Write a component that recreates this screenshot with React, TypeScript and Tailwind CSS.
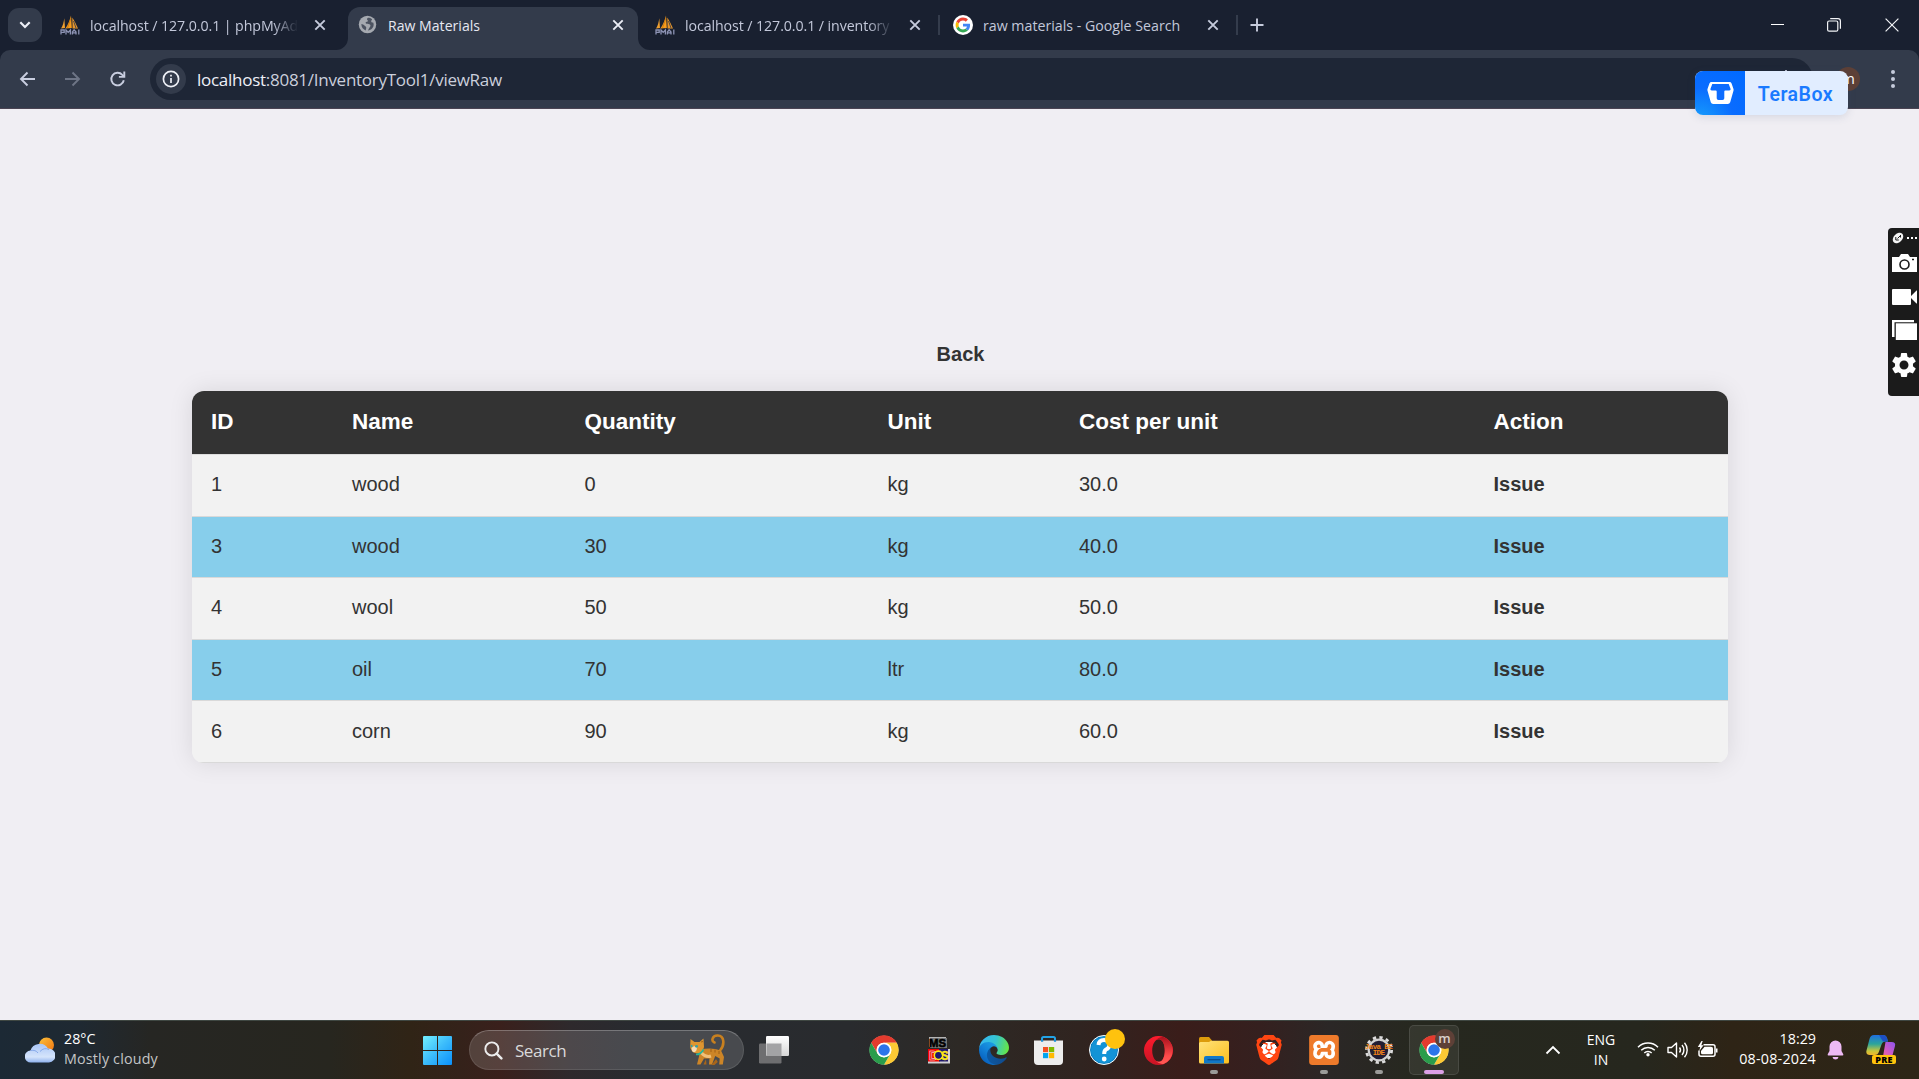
import React, { ReactNode } from "react";
import { SiBrave, SiXampp } from "react-icons/si";

const ui = "font-['Open_Sans','Noto_Sans',sans-serif]";

/* ---------- browser icons ---------- */

function Sails() {
  return (
    <svg width="20" height="20" viewBox="0 0 20 20">
      <path d="M1 13.5C3 10.500 3.700 7 4.300 3.200L5 13z" fill="#f0a030" />
      <path d="M5.500 13.500C8 9.500 10 5 11 0.500L11.800 13z" fill="#f89c1c" />
      <path d="M12.300 2.500C14.500 6 16.500 10 18 13.500H12.600z" fill="#e8962a" />
      <path d="M7.500 13 11 3" stroke="#b86f10" strokeWidth="0.700" />
      <path d="M13.500 6 16 13" stroke="#26324c" strokeWidth="0.800" />
      <path
        d="M1 19.500v-4.500h3.200v2.400H1M6 19.500V15l2.200 2.400L10.400 15v4.500M12.400 19.500V17l1.700-2.200L16 17v2.500M12.400 17.800H16M18.800 14.500v5"
        stroke="#8d93b4"
        strokeWidth="1.300"
        fill="none"
      />
    </svg>
  );
}

function Globe() {
  return (
    <svg width="19" height="19" viewBox="0 0 20 20">
      <circle cx="10" cy="10" r="9.200" fill="#a5a9b0" />
      <path
        d="M10.500 3c-1.400.8-1.200 2-.4 2.500.7.500.4 1.500-.7 1.700-1.600.3-1.700 1-1 1.700.8.700 2.500.4 3.600.8 1.500.5 1.400 2 .5 2.900-.9 1-1.300 2.400-2 3.600 3.600-.300 6-3 6-6.200 0-.8-.2-1.500-.5-2.200-1.200.3-2.100-.2-2.100-1.200 0-1 .9-1.200.9-2C13.500 3.500 12 3 10.500 3zM3.500 9.500c1.400.2 2.600.700 3.300 1.600.8 1 1.900 1 1.900 2.200 0 1-.6 1.400-.4 2.900-2.700-.7-4.700-3-4.800-6.700z"
        fill="#4c5361"
      />
    </svg>
  );
}

function GoogleMark() {
  return (
    <svg width="20" height="20" viewBox="0 0 20 20">
      <circle cx="10" cy="10" r="10" fill="#fff" />
      <g transform="translate(2.600 2.600) scale(0.308)">
        <path fill="#EA4335" d="M24 9.500c3.540 0 6.710 1.220 9.210 3.600l6.850-6.850C35.900 2.380 30.470 0 24 0 14.620 0 6.510 5.380 2.560 13.220l7.980 6.190C12.430 13.720 17.740 9.500 24 9.500z" />
        <path fill="#4285F4" d="M46.980 24.550c0-1.570-.15-3.090-.38-4.550H24v9.020h12.940c-.58 2.960-2.260 5.480-4.780 7.180l7.730 6c4.510-4.180 7.090-10.360 7.090-17.650z" />
        <path fill="#FBBC05" d="M10.530 28.590c-.48-1.450-.76-2.990-.76-4.590s.27-3.140.76-4.590l-7.980-6.190C.92 16.460 0 20.120 0 24c0 3.880.92 7.540 2.560 10.780l7.970-6.190z" />
        <path fill="#34A853" d="M24 48c6.480 0 11.930-2.130 15.890-5.810l-7.730-6c-2.150 1.450-4.920 2.300-8.160 2.300-6.260 0-11.570-4.220-13.470-9.910l-7.980 6.190C6.510 42.620 14.620 48 24 48z" />
      </g>
    </svg>
  );
}

function Cross({ color = "#c6cbdc" }: { color?: string }) {
  return (
    <svg width="12" height="12" viewBox="0 0 12 12" className="shrink-0">
      <path d="M1.300 1.300l9.400 9.400M10.700 1.300l-9.400 9.400" stroke={color} strokeWidth="1.900" />
    </svg>
  );
}

function Tab({ icon, title, width, fade = true }: { icon: ReactNode; title: string; width: string; fade?: boolean }) {
  return (
    <div className={`flex h-[34px] items-center ${width}`}>
      <span className="shrink-0">{icon}</span>
      <span
        className={`mt-px ml-[10px] w-[208px] overflow-hidden whitespace-nowrap text-[14.200px] leading-5 text-[#c3c8da] ${
          fade ? "tracking-[-0.080px] [mask-image:linear-gradient(to_right,black_88%,transparent)]" : ""
        }`}
      >
        {title}
      </span>
      <span className="ml-[16px]">
        <Cross />
      </span>
    </div>
  );
}

function TabStrip() {
  return (
    <div className="flex h-[50px] items-start bg-[#192030]">
      <div className="ml-[8px] mt-[8px] flex h-[34px] w-[34px] items-center justify-center rounded-[11px] bg-[#333b4b]">
        <svg width="12" height="8" viewBox="0 0 12 8">
          <path d="M1.300 1.300 6 6l4.700-4.700" stroke="#eceef6" strokeWidth="2.200" fill="none" />
        </svg>
      </div>
      <div className="mt-[8px] pl-[18px]">
        <Tab icon={<Sails />} title="localhost / 127.0.0.1 | phpMyAd" width="w-[288px]" />
      </div>
      <div className="relative mt-[7px] flex h-[43px] w-[290px] items-center rounded-t-[12px] bg-[#333b4b] pb-[8px] pl-[10px]">
        <svg className="absolute -left-[12px] bottom-0" width="12" height="12">
          <path d="M12 0v12H0A12 12 0 0 0 12 0z" fill="#333b4b" />
        </svg>
        <svg className="absolute -right-[12px] bottom-0" width="12" height="12">
          <path d="M0 0v12h12A12 12 0 0 1 0 0z" fill="#333b4b" />
        </svg>
        <Globe />
        <span className="ml-[11px] mt-[2px] w-[208px] whitespace-nowrap text-[14.100px] leading-5 text-[#e6e8f2]">Raw Materials</span>
        <span className="ml-[16px] mt-px">
          <Cross color="#eceef6" />
        </span>
      </div>
      <div className="mt-[8px] pl-[17px]">
        <Tab icon={<Sails />} title="localhost / 127.0.0.1 / inventory" width="w-[283px]" />
      </div>
      <div className="mt-[15px] h-[20px] w-[2px] bg-[#343c4c]" />
      <div className="mt-[8px] pl-[13px]">
        <Tab icon={<GoogleMark />} title="raw materials - Google Search" width="w-[283px]" fade={false} />
      </div>
      <div className="mt-[15px] h-[20px] w-[2px] bg-[#343c4c]" />
      <svg className="ml-[12px] mt-[18px]" width="14" height="14" viewBox="0 0 14 14">
        <path d="M7 0.500v13M0.500 7h13" stroke="#c6cbdc" strokeWidth="1.900" />
      </svg>
      <div className="ml-auto mr-[20px] mt-[17px] flex h-[15px] items-center">
        <div className="h-px w-[13px] bg-white" />
        <svg className="ml-[43px]" width="14" height="14" viewBox="0 0 14 14" fill="none" stroke="#f2f3f6">
          <rect x="0.600" y="3" width="10.200" height="10.200" rx="1.500" strokeWidth="1.200" />
          <path d="M3.200 0.600H11a2.400 2.400 0 0 1 2.400 2.400v7.800" strokeWidth="1.200" />
        </svg>
        <svg className="ml-[44px]" width="14" height="14" viewBox="0 0 14 14">
          <path d="M0.600 0.600l12.800 12.800M13.400 0.600 0.600 13.400" stroke="#f2f3f6" strokeWidth="1.200" />
        </svg>
      </div>
    </div>
  );
}

function Toolbar() {
  return (
    <div className="h-[59px] bg-[#192030]">
      <div className="flex h-[59px] items-center rounded-t-[10px] border-b border-[#4b4453] bg-[#333b4b]">
        <svg className="ml-[19px]" width="17" height="16" viewBox="0 0 17 16" fill="none" stroke="#c9cee0" strokeWidth="1.900">
          <path d="M16 8H2.500M8.500 1.500 2 8l6.500 6.500" />
        </svg>
        <svg className="ml-[28px]" width="17" height="16" viewBox="0 0 17 16" fill="none" stroke="#6e7586" strokeWidth="1.900">
          <path d="M1 8h13.500M8.500 1.500 15 8l-6.500 6.500" />
        </svg>
        <svg className="ml-[28px]" width="18" height="18" viewBox="0 0 18 18" fill="none" stroke="#c9cee0" strokeWidth="1.900">
          <path d="M14.800 10.200A6.300 6.300 0 1 1 13.300 4.800L15 6.500" />
          <path d="M15.300 1.500v5.400h-5.400" />
        </svg>
        <div className="ml-[23px] flex h-[42px] w-[1663px] items-center rounded-full bg-[#1e2636] pl-[6px]">
          <div className="flex size-[30px] items-center justify-center rounded-full bg-[#333b4b]">
            <svg width="18" height="18" viewBox="0 0 18 18" fill="none" stroke="#eef0f6">
              <circle cx="9" cy="9" r="7.600" strokeWidth="1.700" />
              <path d="M9 8v5M9 4.700v1.900" strokeWidth="1.700" />
            </svg>
          </div>
          <span className="mt-px ml-[11px] text-[17px] leading-6 tracking-[-0.270px] text-[#cbcfdc]">
            <span className="text-[#eef0f8]">localhost</span>:8081/InventoryTool1/viewRaw
          </span>
        </div>
        <div className="ml-[23px] flex size-[24px] items-center justify-center rounded-full bg-[#5d4037] pb-[2px] text-[15px] leading-none text-white">
          m
        </div>
        <div className="ml-[31px] flex w-[4px] flex-col gap-[3px]">
          <i className="size-[4px] rounded-full bg-[#c6cbdc]" />
          <i className="size-[4px] rounded-full bg-[#c6cbdc]" />
          <i className="size-[4px] rounded-full bg-[#c6cbdc]" />
        </div>
      </div>
    </div>
  );
}

/* ---------- overlays ---------- */

function TeraBox() {
  return (
    <div className="absolute left-[1695px] top-[71px]">
      <i className="absolute -top-px left-[90px] h-px w-[2px] bg-[#aeb3c4]" />
      <div className="flex h-[44px] w-[153px] overflow-hidden rounded-[8px] bg-[#e1edff] shadow-[0_2px_8px_rgba(60,80,120,0.150)]">
        <div className="flex w-[50px] items-center justify-center bg-[radial-gradient(circle_at_10%_115%,#18a0fb_0%,#0a6cff_50%,#006aff_100%)]">
          <svg width="27" height="24" viewBox="0 0 27 24">
            <path
              d="M4.500 1h18q1.500 0 2.100 1.400L26.500 8q.3 1-.1 2l-3.200 11.200Q22.600 23 20.800 23H6.200q-1.800 0-2.400-1.800L.6 10q-.4-1-.1-2l1.900-5.600Q3 1 4.500 1z"
              fill="#fff"
            />
            <path d="M5.300 3h16.400l2 5.200q-.4 1.300-1.700 1.300h-3.800q-.9 0-.9 1v6.700q0 1.800-1.800 1.800h-4q-1.800 0-1.800-1.800v-6.700q0-1-.9-1H5q-1.300 0-1.700-1.300z" fill="#0d6cff" />
          </svg>
        </div>
        <div className="flex flex-1 items-center justify-center pt-[3px] pr-[2px] font-[Roboto,sans-serif] text-[19.500px] font-semibold tracking-[0.500px] text-[#1a7aff]">
          TeraBox
        </div>
      </div>
    </div>
  );
}

function CapturePanel() {
  return (
    <div className="absolute left-[1888px] top-[228px] flex h-[168px] w-[31px] flex-col items-start rounded-l-[4px] bg-[#1b1b1b] pl-[4px] text-white">
      <div className="flex h-[26px] items-center pb-[6px]">
        <svg width="12" height="12" viewBox="0 0 12 12">
          <ellipse cx="6" cy="6" rx="6" ry="4.300" transform="rotate(-45 6 6)" fill="#f4f4f4" />
          <path d="M3.800 5v3h3M5.500 6.500 8.500 3.500M8.500 3v2.500" stroke="#1b1b1b" strokeWidth="1" fill="none" />
        </svg>
        <div className="ml-[3px] flex gap-[2px]">
          <i className="size-[2px] bg-white" />
          <i className="size-[2px] bg-white" />
          <i className="size-[2px] bg-white" />
        </div>
      </div>
      <svg width="25" height="18" viewBox="0 0 25 18">
        <path d="M0 3h7l2-3h7l2 3h7v15H0z" fill="#fff" />
        <circle cx="12.500" cy="10.500" r="4.500" fill="none" stroke="#1b1b1b" strokeWidth="1.600" />
        <path d="M20 5.500h2" stroke="#1b1b1b" strokeWidth="1.400" />
      </svg>
      <svg className="mt-[17px]" width="25" height="16" viewBox="0 0 25 16">
        <path d="M1 0h17q1 0 1 1v14q0 1-1 1H1q-1 0-1-1V1q0-1 1-1zM18 8l6.500-6.500H25v13h-.5z" fill="#fff" />
      </svg>
      <svg className="mt-[15px]" width="25" height="20" viewBox="0 0 25 20">
        <path d="M0 0h22v2.200H2.500V17H0z" fill="#fff" />
        <path d="M3.800 3.300H25V20H3.800z" fill="#fff" />
      </svg>
      <svg className="-ml-[3px] mt-[10px]" width="30" height="30" viewBox="0 0 24 24">
        <path
          fill="#fff"
          d="M19.140 12.940c.04-.3.06-.61.06-.94 0-.32-.02-.64-.07-.94l2.030-1.580a.49.49 0 0 0 .12-.61l-1.920-3.320a.488.488 0 0 0-.59-.22l-2.390.96c-.5-.38-1.030-.7-1.620-.94l-.36-2.540a.484.484 0 0 0-.48-.41h-3.840c-.24 0-.43.17-.47.41l-.36 2.540c-.59.24-1.130.57-1.620.94l-2.390-.96c-.22-.08-.47 0-.59.22L2.740 8.870c-.12.21-.08.47.12.61l2.030 1.580c-.05.3-.09.63-.09.94s.02.64.07.94l-2.030 1.580a.49.49 0 0 0-.12.61l1.920 3.320c.12.22.37.29.59.22l2.390-.96c.5.38 1.030.7 1.620.94l.36 2.540c.05.24.24.41.48.41h3.840c.24 0 .44-.17.47-.41l.36-2.540c.59-.24 1.130-.56 1.620-.94l2.390.96c.22.08.47 0 .59-.22l1.920-3.320c.12-.22.07-.47-.12-.61l-2.010-1.580zM12 15.600c-1.980 0-3.600-1.620-3.600-3.600s1.620-3.600 3.600-3.600 3.600 1.620 3.600 3.600-1.620 3.600-3.600 3.600z"
        />
      </svg>
    </div>
  );
}

/* ---------- page ---------- */

const rows = [
  { id: 1, name: "wood", quantity: 0, unit: "kg", cost: "30.0" },
  { id: 3, name: "wood", quantity: 30, unit: "kg", cost: "40.0" },
  { id: 4, name: "wool", quantity: 50, unit: "kg", cost: "50.0" },
  { id: 5, name: "oil", quantity: 70, unit: "ltr", cost: "80.0" },
  { id: 6, name: "corn", quantity: 90, unit: "kg", cost: "60.0" },
];

const columns = "grid grid-cols-[141px_232.500px_303px_191.500px_414.500px_1fr]";

function RawMaterials() {
  return (
    <main className="flex h-[911px] flex-col items-center bg-[#f0eef3] pt-[234px] font-['Liberation_Sans',Arial,sans-serif] text-[20px] text-[#333]">
      <a className="mb-[25px] ml-[2px] leading-[23px] font-bold">Back</a>
      <div className="w-[1536px] overflow-hidden rounded-[12px] bg-[#f2f2f2] shadow-[0_0_25px_rgba(0,0,0,0.100)]">
        <div className={`${columns} h-[64px] items-center border-b border-[#ddd] bg-[#333] pb-[2px] text-[22.500px] leading-[26px] font-bold text-white *:pl-[19.500px]`}>
          <span>ID</span>
          <span>Name</span>
          <span>Quantity</span>
          <span>Unit</span>
          <span>Cost per unit</span>
          <span>Action</span>
        </div>
        {rows.map((r) => (
          <div key={r.id} className={`${columns} h-[61.600px] items-center border-b border-[#d9d9d9] pb-px leading-[23px] *:pl-[19.500px] even:bg-[#f2f2f2] odd:bg-[#87ceeb]`}>
            <span>{r.id}</span>
            <span>{r.name}</span>
            <span>{r.quantity}</span>
            <span>{r.unit}</span>
            <span>{r.cost}</span>
            <a className="font-bold">Issue</a>
          </div>
        ))}
      </div>
    </main>
  );
}

/* ---------- taskbar icons ---------- */

function Weather() {
  return (
    <svg width="30" height="26" viewBox="0 0 30 26">
      <defs>
        <linearGradient id="sun" x1="0" y1="0" x2="1" y2="1">
          <stop offset="0" stopColor="#fcc13a" />
          <stop offset="1" stopColor="#f07310" />
        </linearGradient>
        <linearGradient id="cloud" x1="0" y1="0" x2="0" y2="1">
          <stop offset="0" stopColor="#a9c6f7" />
          <stop offset="0.700" stopColor="#d5e4fb" />
          <stop offset="1" stopColor="#8fb2ee" />
        </linearGradient>
      </defs>
      <circle cx="21.500" cy="8" r="7.500" fill="url(#sun)" />
      <path d="M6 25.500a6 6 0 0 1-.5-12A9.500 9 0 0 1 23 11.500a7 7 0 0 1 1 14z" fill="url(#cloud)" />
      <path d="M5.500 13.500q5-1 7.500 2.500M15 14.500q4-4.500 9-2" stroke="#86a9ea" strokeWidth="1" fill="none" />
    </svg>
  );
}

function Windows() {
  return (
    <svg width="29" height="29" viewBox="0 0 29 29">
      <defs>
        <linearGradient id="win" x1="0" y1="0" x2="29" y2="29" gradientUnits="userSpaceOnUse">
          <stop offset="0" stopColor="#73f0ff" />
          <stop offset="0.500" stopColor="#3cbcfb" />
          <stop offset="1" stopColor="#0a90fb" />
        </linearGradient>
      </defs>
      <path d="M0 1q0-1 1-1h13v14H0zM15 0h13q1 0 1 1v13H15zM0 15h14v14H1q-1 0-1-1zM15 15h14v13q0 1-1 1H15z" fill="url(#win)" />
    </svg>
  );
}

function Cat() {
  return (
    <svg width="36" height="32" viewBox="0 0 36 32" fill="none">
      <path d="M31 16.500C36 11 35.500 1.300 28.500 1.500 23 1.800 22 7 25.500 8.500" stroke="#c8801f" strokeWidth="2.600" strokeLinecap="round" />
      <path d="M11 16q10-3 21 .5l3 6.500-1.200 7.500h-3.600l.5-6-4.500-2.500L23 30.500h-3l.5-6H15l-3.500 6H8l2-8z" fill="#cd8527" />
      <path d="M27 25l1.800 3-3.300 3h-3zM17 25l.5 5.500h-3z" fill="#a8651a" />
      <path d="M12 18.500q5 5.500 10 3.500" stroke="#f0c079" strokeWidth="3" />
      <path d="M1.500 5l4 3h5l4-3.500.5 8.500q-1 6-7 6.500Q2 18.500 1.200 13z" fill="#df9630" />
      <path d="M2.500 14q2.500-3 5.500-.5-.5 5-3.500 4.800Q2.500 17 2.500 14z" fill="#f6dcb8" />
      <ellipse cx="2.600" cy="12" rx="1" ry="1.300" fill="#3a9fa5" />
      <ellipse cx="7.500" cy="12.300" rx="1.500" ry="1.400" fill="#3a9fa5" />
      <path d="M7 20.500q5 0 7.500-5" stroke="#24b59c" strokeWidth="1.700" />
      <path d="M22 15v3M26 15.500v3M30 17v3M12 8l2-.5" stroke="#9c5c14" strokeWidth="0.900" />
    </svg>
  );
}

function TaskView() {
  return (
    <svg width="30" height="28" viewBox="0 0 30 28">
      <defs>
        <linearGradient id="tv" x1="0" y1="0" x2="0" y2="1">
          <stop offset="0" stopColor="#fff" />
          <stop offset="1" stopColor="#d6d6d6" />
        </linearGradient>
      </defs>
      <rect x="0" y="7.500" width="22.500" height="20" rx="1.200" fill="#6e6e70" />
      <rect x="7" y="0" width="23" height="20" rx="1.200" fill="url(#tv)" />
      <rect x="7.500" y="7.500" width="15" height="12.500" fill="#a3a3a5" />
    </svg>
  );
}

function Chrome() {
  return (
    <svg width="30" height="30" viewBox="0 0 48 48">
      <circle cx="24" cy="24" r="23" fill="#fff" />
      <path d="M24 12.300h20.500A23.700 23.700 0 0 0 3.500 12.200l10.200 17.700A11.800 11.800 0 0 1 24 12.300z" fill="#e33b2e" />
      <path d="M34.200 29.900 24 47.600a23.700 23.700 0 0 0 20.500-35.300H24a11.800 11.800 0 0 1 10.200 17.600z" fill="#fcc934" />
      <path d="M13.800 29.900 3.500 12.200A23.700 23.700 0 0 0 24 47.600l10.200-17.700a11.800 11.800 0 0 1-20.400 0z" fill="#2a9d4b" />
      <circle cx="24" cy="24" r="11.800" fill="#fff" />
      <circle cx="24" cy="24" r="9.300" fill="#2b74ea" />
    </svg>
  );
}

function MsDos() {
  return (
    <svg width="22" height="28" viewBox="0 0 22 28" className="font-['Liberation_Sans',sans-serif] font-bold">
      <path d="M1 1h17v10H1z" fill="#b5b5b5" />
      <path d="M2 2h17v10H2z" fill="#777" />
      <text x="1" y="10.500" fontSize="11.500" textLength="17" lengthAdjust="spacingAndGlyphs" fill="#000" stroke="#000" strokeWidth="0.600">
        MS
      </text>
      <path d="M0 13h22v14.500H0z" fill="#d0d0d0" />
      <path d="M0 13h12v12.500H0z" fill="#f40000" />
      <path d="M11 13h9v12.500h-9z" fill="#20186e" />
      <text x="1" y="24" fontSize="13" fill="#e00000" stroke="#fff" strokeWidth="0.500">
        D
      </text>
      <circle cx="10.500" cy="19.300" r="4.200" fill="#20186e" stroke="#ffe818" strokeWidth="1.600" />
      <text x="13" y="24" fontSize="13" textLength="7.500" lengthAdjust="spacingAndGlyphs" fill="#ffe818" stroke="#ffe818" strokeWidth="0.500">
        S
      </text>
    </svg>
  );
}

function Edge() {
  return (
    <svg width="30" height="30" viewBox="0 0 256 256">
      <defs>
        <linearGradient id="e1" x1="63" y1="150" x2="241" y2="150" gradientUnits="userSpaceOnUse">
          <stop offset="0" stopColor="#0c59a4" />
          <stop offset="1" stopColor="#114a8b" />
        </linearGradient>
        <linearGradient id="e2" x1="150" y1="90" x2="46" y2="215" gradientUnits="userSpaceOnUse">
          <stop offset="0" stopColor="#1b9de2" />
          <stop offset="0.500" stopColor="#1383d9" />
          <stop offset="1" stopColor="#0a66c2" />
        </linearGradient>
        <linearGradient id="e3" x1="20" y1="50" x2="250" y2="110" gradientUnits="userSpaceOnUse">
          <stop offset="0" stopColor="#35b8f1" />
          <stop offset="0.500" stopColor="#35c4d0" />
          <stop offset="1" stopColor="#66e646" />
        </linearGradient>
      </defs>
      <path fill="url(#e1)" d="M231 190.500c-3.400 1.800-6.900 3.400-10.500 4.700a101.900 101.900 0 0 1-35.900 6.400c-47.300 0-88.500-32.500-88.500-74.300 0-11.500 6.400-21.900 16.400-27.600-42.800 1.800-53.800 46.400-53.800 72.500 0 74 68.100 81.400 82.800 81.400 7.900 0 19.800-2.300 27-4.600l1.300-.4a128.300 128.300 0 0 0 66.600-52.800 4 4 0 0 0-5.400-5.300z" />
      <path fill="url(#e2)" d="M105.700 241.400a79.200 79.200 0 0 1-22.700-21.300 80.700 80.700 0 0 1 29.500-120c3.200-1.500 8.500-4.100 15.600-4a32.400 32.400 0 0 1 25.700 13 31.900 31.900 0 0 1 6.300 18.700c0-.2 24.500-79.600-80-79.600-43.900 0-80 41.600-80 78.200a130.200 130.200 0 0 0 12.100 56 128 128 0 0 0 156.400 67 75.500 75.500 0 0 1-62.800-8z" />
      <path fill="url(#e3)" d="M152.300 148.900c-.9 1-3.400 2.500-3.400 5.600 0 2.600 1.700 5.200 4.800 7.300 14.300 10 41.400 8.600 41.500 8.600a59.600 59.600 0 0 0 30.300-8.300 61.400 61.400 0 0 0 30.400-52.900c.3-22.400-8-37.300-11.300-43.900C223.500 23.900 177.700 0 128 0A128 128 0 0 0 0 126.200c.5-36.500 36.800-66 80-66 3.500 0 23.500.3 42 10a72.600 72.600 0 0 1 30.900 29.300c6.100 10.600 7.200 24.100 7.200 29.500s-2.700 13.300-7.800 19.900z" />
    </svg>
  );
}

function Store() {
  return (
    <svg width="29" height="29" viewBox="0 0 29 29">
      <path d="M8 6V2.500Q8 1 9.500 1h10Q21 1 21 2.500V6" stroke="#23a3e6" strokeWidth="2" fill="none" />
      <path d="M0 4.500h29V25q0 4-4 4H4q-4 0-4-4z" fill="#ededed" />
      <path d="M7 3.800h2.200v2H7zM19.900 3.800h2.200v2h-2.200z" fill="#1b8fd6" />
      <path d="M9 11h5.200v5.200H9z" fill="#f25022" />
      <path d="M15 11h5.200v5.200H15z" fill="#7fba00" />
      <path d="M9 17h5.200v5.200H9z" fill="#00a4ef" />
      <path d="M15 17h5.200v5.200H15z" fill="#ffb900" />
    </svg>
  );
}

function Help() {
  return (
    <span className="relative flex size-[30px] items-center justify-center rounded-full border-[1.500px] border-white bg-[#1393d6] shadow-[inset_0_0_0_1px_#0d7fc0]">
      <svg width="16" height="24" viewBox="0 0 16 24">
        <path d="M2.500 7Q3 2 8 2t5.500 4.500Q13.500 10 10 11.500 8.200 12.500 8.200 16" stroke="#fff" strokeWidth="4" fill="none" />
        <circle cx="8.200" cy="21" r="2.400" fill="#fff" />
      </svg>
      <i className="absolute -top-[7px] left-[15px] size-[20px] rounded-full bg-[#ffc20e]" />
    </span>
  );
}

function Opera() {
  return (
    <svg width="29" height="29" viewBox="0 0 29 29">
      <defs>
        <linearGradient id="op" x1="0" y1="0" x2="0" y2="1">
          <stop offset="0" stopColor="#ff1b2d" />
          <stop offset="1" stopColor="#c81424" />
        </linearGradient>
        <linearGradient id="op2" x1="0" y1="0" x2="0" y2="1">
          <stop offset="0" stopColor="#a8101c" />
          <stop offset="0.700" stopColor="#ff4b4b" />
          <stop offset="1" stopColor="#ff5a55" />
        </linearGradient>
      </defs>
      <path fillRule="evenodd" d="M14.500 0a14.500 14.500 0 1 0 0 29 14.500 14.500 0 0 0 0-29zM15 3.200c3.600 0 5.800 5 5.800 11.300S18.600 25.800 15 25.800s-6.800-4.600-6.800-11.300S11.400 3.200 15 3.200z" fill="url(#op)" />
      <path
        fillRule="evenodd"
        d="M11 4.500Q15 1 19 .8A14.500 14.500 0 0 1 19 28.200Q15 28 11 24.500q1.800 1.300 4 1.300c3.600 0 5.800-5 5.800-11.300S18.600 3.200 15 3.200q-2.200 0-4 1.300z"
        fill="url(#op2)"
      />
    </svg>
  );
}

function Folder() {
  return (
    <svg width="30" height="27" viewBox="0 0 30 27">
      <defs>
        <linearGradient id="fo" x1="0" y1="0" x2="1" y2="1">
          <stop offset="0" stopColor="#ffe27a" />
          <stop offset="1" stopColor="#fcbf1e" />
        </linearGradient>
      </defs>
      <path d="M0 1.500Q0 0 1.500 0H10l3 3.500V9H0z" fill="#dc9c0c" />
      <path d="M0 6.500Q0 5 1.500 5H10l2-1.200h16.500q1.500 0 1.500 1.500V25q0 1.500-1.500 1.500h-27Q0 26.500 0 25z" fill="url(#fo)" />
      <path d="M5 26.500V21q0-2 2-2h16q2 0 2 2v5.500z" fill="#1178c8" />
      <path d="M8.500 22.700h13" stroke="#0a4c8c" strokeWidth="1.300" />
    </svg>
  );
}

function Brave() {
  return (
    <span className="flex size-[30px] items-center justify-center bg-[radial-gradient(circle,white_0_8px,transparent_8.500px)]">
      <SiBrave size={30} color="#ff4612" />
    </span>
  );
}

function Xampp() {
  return (
    <span className="flex size-[30px] items-center justify-center bg-[radial-gradient(circle,white_0_14px,transparent_14.500px)]">
      <SiXampp size={30} color="#ee7a2b" />
    </span>
  );
}

function JavaEE() {
  return (
    <span className="relative flex size-[28px] items-center justify-center">
      <svg className="absolute inset-0" width="28" height="28" viewBox="0 0 28 28">
        <circle cx="14" cy="14" r="12.600" fill="none" stroke="#dcdcdc" strokeWidth="2.800" strokeDasharray="3.300 3.297" />
        <circle cx="14" cy="14" r="10.300" fill="#221d33" stroke="#d2d2d2" strokeWidth="2.200" />
      </svg>
      <span className="relative text-center font-['Liberation_Mono',monospace] text-[7.500px] leading-[6.500px] font-bold tracking-[-0.600px] whitespace-nowrap text-[#f28418]">
        Java EE
        <br />
        IDE
      </span>
    </span>
  );
}

function TaskCell({ children, mark }: { children: ReactNode; mark?: "open" | "active" }) {
  return (
    <div className="flex h-[58px] w-[55px] flex-col items-center justify-start">
      <div
        className={`mt-[4px] flex h-[50px] w-[50px] flex-col items-center rounded-[5px] ${
          mark === "active" ? "border border-white/10 bg-white/[0.070]" : "border border-transparent"
        }`}
      >
        <div className="mt-[4px] flex h-[40px] items-center">{children}</div>
        {mark === "open" && <i className="h-[4px] w-[8px] rounded-full bg-[#9b9b99]" />}
        {mark === "active" && <i className="h-[4px] w-[20px] rounded-full bg-[#dba0e6]" />}
      </div>
    </div>
  );
}

function Tray() {
  return (
    <div className="ml-auto flex h-[58px] items-center text-white">
      <svg width="16" height="10" viewBox="0 0 16 10" fill="none" stroke="#fff" strokeWidth="1.800">
        <path d="M1.500 8.500 8 2l6.500 6.500" />
      </svg>
      <div className="ml-[24px] w-[32px] text-center text-[14px] leading-[20px]">
        ENG
        <br />
        IN
      </div>
      <svg className="ml-[20px] -mt-[2px]" width="22" height="16" viewBox="0 0 22 16" fill="none" stroke="#fff" strokeWidth="1.500">
        <path d="M1 6.200a14 14 0 0 1 20 0M4.200 9.200a9.700 9.700 0 0 1 13.600 0M7.300 12a5.300 5.300 0 0 1 7.400 0" />
        <circle cx="11" cy="13.800" r="1.700" fill="#fff" stroke="none" />
      </svg>
      <svg className="ml-[8px]" width="22" height="18" viewBox="0 0 22 18" fill="none" stroke="#fff" strokeWidth="1.400">
        <path d="M1 6.500h3.500L9.500 2v14l-5-4.500H1z" strokeLinejoin="round" />
        <path d="M12.500 6.500a4 4 0 0 1 0 5M15 4a7.500 7.500 0 0 1 0 10M17.500 1.800a11 11 0 0 1 0 14.400" />
      </svg>
      <svg className="ml-[8px]" width="22" height="18" viewBox="0 0 22 18" fill="none">
        <path d="M6.500 3.800H16q2 0 2 2v7.400q0 2-2 2H4q-2 0-2-2V9.500" stroke="#fff" strokeWidth="1.500" />
        <path d="M7.500 5.800H14q2 0 2 1.500v4.400q0 1.500-1.500 1.500h-9q-1.500 0-1.500-1.500V10z" fill="#fff" />
        <path d="M19 7.500h1.500v4H19z" fill="#fff" />
        <path d="M4.500 0 .8 6h2.400L2.300 10 6.500 4.300H4.300L5.700 0z" fill="#fff" />
      </svg>
      <div className="-mt-[2px] ml-[17px] w-[80px] text-right text-[14.300px] leading-[20px]">
        18:29
        <br />
        <span className="tracking-[0.220px]">08-08-2024</span>
      </div>
      <svg className="ml-[11px]" width="17" height="20" viewBox="0 0 17 20">
        <path d="M8.500 0.500a6 6 0 0 1 6 6V11l1.800 3.200q.3 1.300-.8 1.300h-14q-1.100 0-.8-1.300L2.500 11V6.500a6 6 0 0 1 6-6zM5.500 17h6q-.5 2.500-3 2.500t-3-2.500z" fill="#edb9f4" />
      </svg>
      <div className="relative mr-[23px] ml-[22px] size-[30px]">
        <svg width="30" height="26" viewBox="0 0 30 26">
          <defs>
            <linearGradient id="c1" x1="0" y1="0" x2="0" y2="1">
              <stop offset="0" stopColor="#1f6fe0" />
              <stop offset="0.450" stopColor="#2ba59a" />
              <stop offset="0.800" stopColor="#c8c63c" />
              <stop offset="1" stopColor="#f2b52c" />
            </linearGradient>
            <linearGradient id="c2" x1="1" y1="0" x2="0" y2="1">
              <stop offset="0" stopColor="#8c54f0" />
              <stop offset="0.500" stopColor="#d55bc0" />
              <stop offset="1" stopColor="#f77a70" />
            </linearGradient>
          </defs>
          <path d="M8 0h9q3 0 4 3l1 3.500h-3q-2.500 0-3.300 2.500L13 16.500Q12 20 8.500 20H4q-4.500 0-3.500-4.500L3.500 4Q4.500 0 8 0z" fill="url(#c1)" />
          <path d="M17 0q3 0 4 3l1 3.500h-5L13 0z" fill="#1d4fc4" />
          <path d="M19.500 7h6Q30 7 29 11l-3 11q-1 3.500-4.500 3.500h-9q3.500 0 4.500-4z" fill="url(#c2)" />
        </svg>
        <span className="absolute top-[20px] left-[6px] flex h-[9px] w-[24px] items-center justify-center rounded-[2px] bg-[#ffc40c] text-[9px] leading-none font-extrabold tracking-[0.300px] text-black">
          PRE
        </span>
      </div>
    </div>
  );
}

function Taskbar() {
  return (
    <footer className="flex h-[59px] items-start border-t border-[#3f4742] bg-[linear-gradient(to_right,#1c2935_0,#1f2932_80px,#262623_150px,#27261f_330px,#302416_410px,#34221a_460px,#3a201c_500px,#2e292c_570px,#282b30_640px,#292b2e_850px,#2d2925_960px,#302420_1080px,#3a1d1a_1180px,#35201f_1260px,#2b2726_1330px,#26281f_1420px,#26271e_1640px,#2e2416_1730px,#2d2617_1919px)]">
      <div className="flex h-[57px] w-[410px] items-center pl-[25px]">
        <Weather />
        <div className="-mt-px ml-[9px] text-[14.300px] leading-[20px] text-white">
          28°C
          <div className="tracking-[0.180px] text-[#c4c5c6]">Mostly cloudy</div>
        </div>
      </div>
      <TaskCell>
        <Windows />
      </TaskCell>
      <div className="mt-[9px] ml-[4px] flex h-[40px] w-[275px] items-center rounded-full border border-white/10 border-t-white/25 bg-white/15 pr-[18px] pl-[14px]">
        <svg width="19" height="19" viewBox="0 0 20 20" fill="none" stroke="#ececec">
          <circle cx="8.300" cy="8.300" r="6.900" strokeWidth="2" />
          <path d="M13.300 13.300l5 5" strokeWidth="2.600" strokeLinecap="round" />
        </svg>
        <span className="mt-px ml-[12px] text-[17px] tracking-[-0.450px] text-[#dadada]">Search</span>
        <span className="ml-auto -mt-px">
          <Cat />
        </span>
      </div>
      <div className="mr-[55px] ml-[2px]">
        <TaskCell>
          <TaskView />
        </TaskCell>
      </div>
      <TaskCell>
        <Chrome />
      </TaskCell>
      <TaskCell>
        <MsDos />
      </TaskCell>
      <TaskCell>
        <Edge />
      </TaskCell>
      <TaskCell>
        <Store />
      </TaskCell>
      <TaskCell>
        <Help />
      </TaskCell>
      <TaskCell>
        <Opera />
      </TaskCell>
      <TaskCell mark="open">
        <Folder />
      </TaskCell>
      <TaskCell>
        <Brave />
      </TaskCell>
      <TaskCell mark="open">
        <Xampp />
      </TaskCell>
      <TaskCell mark="open">
        <JavaEE />
      </TaskCell>
      <TaskCell mark="active">
        <span className="relative">
          <Chrome />
          <span className="absolute -top-[6px] left-[16px] flex size-[20px] items-center justify-center rounded-full bg-[#5d4037] pb-[2px] text-[13px] leading-none font-semibold text-[#d9cfcb]">
            m
          </span>
        </span>
      </TaskCell>
      <Tray />
    </footer>
  );
}

export default function App() {
  return (
    <div className={`relative h-[1079px] w-[1919px] overflow-hidden ${ui}`}>
      <TabStrip />
      <Toolbar />
      <RawMaterials />
      <Taskbar />
      <TeraBox />
      <CapturePanel />
    </div>
  );
}
